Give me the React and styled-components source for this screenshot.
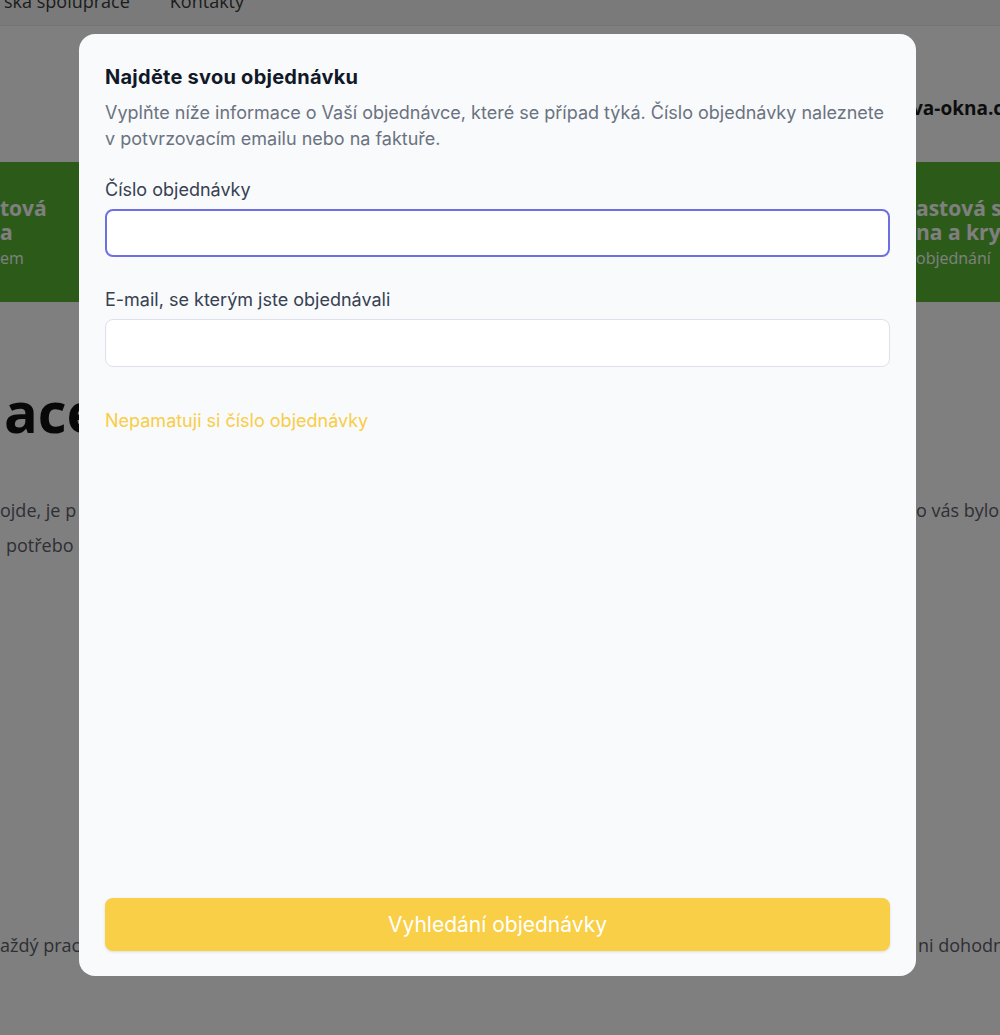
import React from 'react';
import styled, { createGlobalStyle } from 'styled-components';

const Global = createGlobalStyle`
  html, body { margin: 0; padding: 0; }
  body {
    background: #ffffff;
    font-family: "Open Sans", "Liberation Sans", sans-serif;
    overflow: hidden;
  }
  * { box-sizing: border-box; }
`;

/* ---------- background page (under the overlay) ---------- */

const Page = styled.div`
  height: 1035px;
  overflow: hidden;
  color: #444;
`;

const Nav = styled.nav`
  margin-top: -12px;
  height: 38px;
  display: flex;
  align-items: flex-start;
  gap: 40px;
  padding-left: 4px;
  background: #f4f4f4;
  border-bottom: 1px solid #e6e6e6;
  font-size: 18px;
  line-height: 26px;
  color: #3a3a3a;
  white-space: nowrap;
  overflow: hidden;
`;

const Header = styled.header`
  height: 136px;
  display: flex;
  justify-content: flex-end;
  align-items: flex-start;
  padding-top: 69px;
  overflow: hidden;
`;

const Logo = styled.span`
  flex: 0 0 88px;
  min-width: 0;
  overflow: hidden;
  font-size: 19px;
  line-height: 26px;
  font-weight: 700;
  color: #1b1b1b;
  white-space: nowrap;
`;

const Band = styled.section`
  height: 140px;
  background: #58b632;
  display: flex;
  justify-content: space-between;
  padding-top: 34px;
  overflow: hidden;
  color: #ffffff;
`;

const BandCard = styled.div`
  flex: 0 0 ${p => p.$w}px;
  overflow: hidden;
  white-space: nowrap;
  padding-left: ${p => p.$pad || 0}px;
`;

const BandTitle = styled.div`
  font-size: 21px;
  line-height: 24px;
  font-weight: 700;
`;

const BandSub = styled.div`
  font-size: 16px;
  line-height: 24px;
  margin-top: 2px;
`;

const BigHeading = styled.h1`
  margin: 75px 0 0;
  padding-left: 4px;
  font-size: 56px;
  line-height: 68px;
  font-weight: 700;
  color: #111111;
  white-space: nowrap;
`;

const TextRow = styled.div`
  display: flex;
  justify-content: space-between;
  font-size: 18px;
  line-height: 35px;
  color: #5c5e6a;
  white-space: nowrap;
  margin-top: ${p => p.$mt || 0}px;
`;

const TextLeft = styled.span`
  padding-left: ${p => p.$pad || 0}px;
`;

const TextRight = styled.span`
  flex: 0 0 ${p => p.$w || 84}px;
  min-width: 0;
  overflow: hidden;
`;

/* ---------- overlay + modal ---------- */

const Overlay = styled.div`
  position: fixed;
  inset: 0;
  background: rgba(0, 0, 0, 0.5);
  display: flex;
  align-items: flex-start;
  padding: 34px 0 0 79px;
`;

const Modal = styled.div`
  width: 837px;
  height: 942px;
  background: #f8fafc;
  border-radius: 16px;
  padding: 29px 26px 25px;
  display: flex;
  flex-direction: column;
  font-family: Inter, "Noto Sans", sans-serif;
`;

const Title = styled.h2`
  margin: 0;
  font-size: 20px;
  line-height: 28px;
  font-weight: 700;
  letter-spacing: 0.25px;
  color: #111827;
`;

const Desc = styled.p`
  margin: 9px 0 0;
  font-size: 18px;
  line-height: 26px;
  color: #6b7280;
`;

const Field = styled.div`
  display: flex;
  flex-direction: column;
  gap: 7px;
  margin-top: ${p => p.$mt}px;
`;

const Label = styled.label`
  font-size: 18px;
  line-height: 24px;
  font-weight: 400;
  color: #374151;
`;

const Input = styled.input`
  height: 48px;
  width: 100%;
  border-radius: 8px;
  background: #ffffff;
  font-family: inherit;
  font-size: 18px;
  padding: 0 14px;
  outline: none;
  border: ${p => (p.$focus ? '2px solid #6f6fe4' : '1px solid #dfe0ee')};
`;

const Link = styled.a`
  margin-top: 42px;
  font-size: 18px;
  line-height: 24px;
  font-weight: 400;
  color: #f9cd45;
  text-decoration: none;
  cursor: pointer;
`;

const SubmitButton = styled.button`
  margin-top: auto;
  height: 53px;
  width: 100%;
  border: none;
  border-radius: 8px;
  background: #f8cf46;
  color: #ffffff;
  font-family: inherit;
  font-size: 21px;
  font-weight: 400;
  box-shadow: 0 1px 3px rgba(0, 0, 0, 0.12);
  cursor: pointer;
`;

export default function App() {
  return (
    <>
      <Global />
      <Page>
        <Nav>
          <span>ská spolupráce</span>
          <span>Kontakty</span>
        </Nav>
        <Header>
          <Logo>va-okna.cz</Logo>
        </Header>
        <Band>
          <BandCard $w={79}>
            <BandTitle>tová</BandTitle>
            <BandTitle>a</BandTitle>
            <BandSub>em</BandSub>
          </BandCard>
          <BandCard $w={90} $pad={6}>
            <BandTitle>astová střechy</BandTitle>
            <BandTitle>na a krytiny</BandTitle>
            <BandSub>objednání</BandSub>
          </BandCard>
        </Band>
        <BigHeading>ace</BigHeading>
        <TextRow $mt={48}>
          <TextLeft>ojde, je p</TextLeft>
          <TextRight $w={84}>o vás bylo</TextRight>
        </TextRow>
        <TextRow>
          <TextLeft $pad={6}>potřebo</TextLeft>
        </TextRow>
        <TextRow $mt={365}>
          <TextLeft>aždý prac</TextLeft>
          <TextRight $w={82}>ni dohodnuto</TextRight>
        </TextRow>
      </Page>

      <Overlay>
        <Modal role="dialog" aria-modal="true">
          <Title>Najděte svou objednávku</Title>
          <Desc>
            Vyplňte níže informace o Vaší objednávce, které se případ týká. Číslo objednávky naleznete
            v potvrzovacím emailu nebo na faktuře.
          </Desc>
          <Field $mt={26}>
            <Label htmlFor="order">Číslo objednávky</Label>
            <Input id="order" $focus />
          </Field>
          <Field $mt={31}>
            <Label htmlFor="email">E-mail, se kterým jste objednávali</Label>
            <Input id="email" type="email" />
          </Field>
          <Link>Nepamatuji si číslo objednávky</Link>
          <SubmitButton>Vyhledání objednávky</SubmitButton>
        </Modal>
      </Overlay>
    </>
  );
}
